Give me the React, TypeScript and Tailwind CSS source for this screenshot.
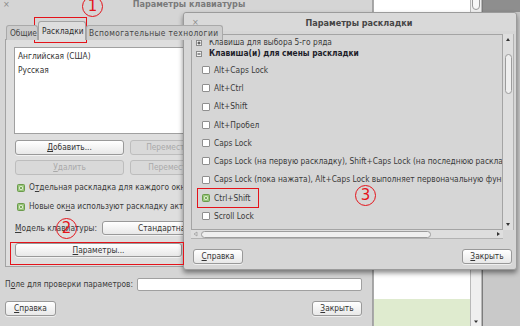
import React from 'react';

type Kids = { children?: React.ReactNode };

const U = ({ children }: Kids) => <span className="underline underline-offset-[1px]">{children}</span>;

function Btn({ children, disabled, className = '' }: Kids & { disabled?: boolean; className?: string }) {
  return (
    <div
      className={
        'flex items-center justify-center rounded-[3px] border whitespace-nowrap overflow-hidden ' +
        (disabled
          ? 'border-[#bdbdbd] bg-[#d9d9d9] text-[#a9a9a9] '
          : 'border-[#999999] bg-linear-to-b from-white to-[#e8e8e8] text-[#333333] shadow-[0_1px_0_rgba(255,255,255,0.6)] ') +
        className
      }
    >
      {children}
    </div>
  );
}

function GreenCheck() {
  return (
    <svg width="8" height="8" viewBox="0 0 8 8" className="shrink-0">
      <rect x="0.5" y="0.5" width="7" height="7" rx="1" fill="#97c578" stroke="#6a9a4c" />
      <rect x="2" y="2" width="4" height="4" fill="#d9ecc9" />
      <path d="M2.6 2.6 L5.4 5.4 M5.4 2.6 L2.6 5.4" stroke="#6f9f52" strokeWidth="0.9" />
    </svg>
  );
}

function EmptyCheck() {
  return <span className="block w-[8px] h-[8px] shrink-0 rounded-[1px] border border-[#8f8f8f] bg-white" />;
}

function Expander({ open }: { open?: boolean }) {
  return (
    <svg width="6" height="6" viewBox="0 0 6 6" className="shrink-0">
      <rect x="0.5" y="0.5" width="5" height="5" fill="#f4f4f4" stroke="#8a8a8a" />
      <path d="M1.5 3 H4.5" stroke="#333" strokeWidth="1" />
      {!open && <path d="M3 1.5 V4.5" stroke="#333" strokeWidth="1" />}
    </svg>
  );
}

const options = [
  'Alt+Caps Lock',
  'Alt+Ctrl',
  'Alt+Shift',
  'Alt+Пробел',
  'Caps Lock',
  'Caps Lock (на первую раскладку), Shift+Caps Lock (на последнюю раскладку)',
  'Caps Lock (пока нажата), Alt+Caps Lock выполняет первоначальную функцию Caps Lock',
  'Ctrl+Shift',
  'Scroll Lock',
];

function BackWindow() {
  return (
    <div className="absolute left-[372px] top-0 w-[148px] h-[326px] flex">
      <div className="w-[2px] bg-[#a9a9a9]" />
      <div className="w-[96px] flex flex-col bg-white">
        <div className="flex-1" />
        <div className="h-[27px] bg-[#dfebcf]" />
      </div>
      <div className="w-[12px] flex flex-col justify-between bg-[#efefef] border-x border-[#b8b8b8]">
        <div className="mx-[1px] h-[12px] -mt-[2px] rounded-b-full border border-[#9a9a9a] bg-[#f7f7f7]" />
        <svg width="10" height="6" viewBox="0 0 10 6" className="mb-[1px]">
          <path d="M3 1.5 H7 L5 4 Z" fill="#333" />
        </svg>
      </div>
      <div className="w-[1px] bg-[#7c7c7c]" />
      <div className="flex-1 flex flex-col">
        <div className="h-[12px] bg-[#8e8e8e]" />
        <div className="flex-1 bg-[#c9c9c9]" />
      </div>
    </div>
  );
}

function KeyboardWindow() {
  return (
    <div className="absolute left-0 top-[-6px] w-[373px] h-[340px] flex flex-col bg-[#d5d5d5] rounded-t-[5px] border-r border-[#a3a3a3]">
      <div className="h-[18px] flex items-center">
        <span className="w-[14px] pl-[3px] pt-[2px] text-[9px] text-[#8a8a8a]">×</span>
        <div className="flex-1 text-center pl-[6px] pt-[3px] font-bold text-[9px] text-[#7a7a7a]">
          Параметры клавиатуры
        </div>
        <span className="w-[14px]" />
      </div>

      <div className="flex flex-col pl-[5px] pr-[10px] pt-[10px]">
        <div className="flex items-end h-[18px] pl-[1px] -mb-px relative z-10">
          <div className="w-[32px] h-[15px] pl-[3px] flex items-center overflow-hidden whitespace-nowrap rounded-t-[3px] border border-b-0 border-[#a9a9a9] bg-[#cdcdcd] text-[#454545]">
            Общие
          </div>
          <div className="w-[48px] h-[19px] pl-[3px] flex items-center overflow-hidden whitespace-nowrap rounded-t-[3px] border border-b-0 border-[#a3a3a3] bg-[#dedede] text-[#2e2e2e]">
            Раскладки
          </div>
          <div className="h-[15px] pl-[2px] pr-[4px] flex items-center rounded-t-[3px] border border-b-0 border-[#a9a9a9] bg-[#cdcdcd] text-[#454545] whitespace-nowrap tracking-[0.4px]">
            Вспомогательные технологии
          </div>
        </div>

        <div className="flex flex-col border border-[#a3a3a3] bg-[#dedede] pt-[7px] pl-[8px] pr-[8px] pb-[9px]">
          <div className="h-[87px] border border-[#a0a0a0] bg-white px-[3px] pt-px text-[#333]">
            <div className="h-[14px] flex items-center">Английская (США)</div>
            <div className="h-[14px] flex items-center">Русская</div>
          </div>

          <div className="mt-[6px] pl-[1px] grid grid-cols-[109px_109px_109px] gap-x-[6px] gap-y-[5px]">
            <Btn className="h-[15px]">
              <U>Д</U>обавить...
            </Btn>
            <Btn disabled className="h-[15px]">
              Переместить вверх
            </Btn>
            <Btn disabled className="h-[15px]">
              Сбросить
            </Btn>
            <Btn disabled className="h-[15px]">
              <U>У</U>далить
            </Btn>
            <Btn disabled className="h-[15px]">
              Переместить вниз
            </Btn>
          </div>

          <div className="mt-[3px] flex flex-col pl-[3px] text-[#3a3a3a]">
            <div className="h-[19px] flex items-center gap-[4px] whitespace-nowrap">
              <GreenCheck />
              <span>
                О<U>т</U>дельная раскладка для каждого окна
              </span>
            </div>
            <div className="h-[19px] flex items-center gap-[4px] whitespace-nowrap">
              <GreenCheck />
              <span>
                Новые ок<U>н</U>а используют раскладку активного окна
              </span>
            </div>
          </div>

          <div className="mt-[5px] h-[14px] flex items-center">
            <span className="w-[88px] pl-[1px] text-[#3a3a3a] whitespace-nowrap">
              <U>М</U>одель клавиатуры:
            </span>
            <Btn className="flex-1 h-[14px] !justify-start pl-[35px]">Стандартная 105-клавишная (межд.)</Btn>
          </div>

          <Btn className="mt-[8px] ml-[1px] w-[167px] h-[14px]">
            <U>П</U>араметры...
          </Btn>
        </div>

        <div className="mt-[11px] h-[13px] flex items-center text-[#3a3a3a]">
          <span className="whitespace-nowrap">
            П<U>о</U>ле для проверки параметров:
          </span>
          <div className="ml-auto w-[225px] h-[13px] rounded-[2px] border border-[#a0a0a0] bg-white" />
        </div>

        <div className="mt-[10px] flex justify-between">
          <Btn className="w-[51px] h-[15px]">
            <U>С</U>правка
          </Btn>
          <Btn className="w-[50px] h-[15px]">
            <U>З</U>акрыть
          </Btn>
        </div>
      </div>
    </div>
  );
}

function LayoutDialog() {
  return (
    <div className="absolute left-[183px] top-[12px] w-[334px] h-[258px] flex flex-col bg-[#d6d6d6] rounded-[3px] border border-[#9b9b9b] shadow-[0_3px_5px_rgba(0,0,0,0.45)]">
      <div className="h-[18px] flex items-center bg-[#d9d9d9] rounded-t-[3px]">
        <span className="w-[16px] pl-[8px] pt-[1px] text-[9px] text-[#8d8d8d]">×</span>
        <div className="flex-1 text-center pl-[2px] pt-[2px] font-bold text-[9px] text-[#454545]">
          Параметры раскладки
        </div>
      </div>

      <div className="pl-[7px] pt-[3px] grid grid-cols-[312px_11px]">
        <div className="h-[196px] border border-[#a4a4a4] overflow-hidden pt-[2px] text-[#3a3a3a]">
          <div className="h-[11px] flex items-center gap-[7px] pl-[4px] whitespace-nowrap">
            <Expander />
            <span>Клавиша для выбора 5-го ряда</span>
          </div>
          <div className="h-[11px] flex items-center gap-[7px] pl-[4px] whitespace-nowrap">
            <Expander open />
            <span className="font-bold text-[#1e1e2a]">Клавиша(и) для смены раскладки</span>
          </div>
          <div className="mt-[2px] flex flex-col">
            {options.map((o) => (
              <div key={o} className="h-[18.25px] flex items-center gap-[4px] pl-[10px] whitespace-nowrap">
                {o === 'Ctrl+Shift' ? <GreenCheck /> : <EmptyCheck />}
                <span>{o}</span>
              </div>
            ))}
          </div>
        </div>

        <div className="h-[196px] flex flex-col items-center justify-between bg-[#dedede] border-r border-[#b3b3b3] py-[3px]">
          <svg width="6" height="5" viewBox="0 0 6 5">
            <path d="M3 1 L5 4 H1 Z" fill="#333" />
          </svg>
          <div className="flex-1 w-full px-[1.5px] pt-[12px] pb-[128px]">
            <div className="h-full rounded-full border border-[#9c9c9c] bg-[#efefef]" />
          </div>
          <svg width="6" height="5" viewBox="0 0 6 5">
            <path d="M1 1 H5 L3 4 Z" fill="#333" />
          </svg>
        </div>

        <div className="h-[9px] flex items-center bg-[#dedede] border-b border-[#b3b3b3] px-[2px] gap-[3px]">
          <svg width="5" height="6" viewBox="0 0 5 6">
            <path d="M4 1 V5 L1 3 Z" fill="none" stroke="#9a9a9a" strokeWidth="0.7" />
          </svg>
          <div className="w-[230px] h-[7px] rounded-full border border-[#9c9c9c] bg-[#efefef]" />
          <div className="flex-1" />
          <svg width="5" height="6" viewBox="0 0 5 6">
            <path d="M1 1 V5 L4 3 Z" fill="#333" />
          </svg>
        </div>
        <div />
      </div>

      <div className="mt-[10px] pl-[9px] pr-[4px] flex justify-between">
        <Btn className="w-[50px] h-[15px]">
          <U>С</U>правка
        </Btn>
        <Btn className="w-[50px] h-[15px]">
          <U>З</U>акрыть
        </Btn>
      </div>
    </div>
  );
}

function Circle({ n, className }: { n: string; className: string }) {
  return (
    <div
      className={
        'absolute w-[21px] h-[21px] rounded-full border-[1.5px] border-[#e4131a] flex items-center justify-center text-[15px] leading-none text-[#e4131a] [font-stretch:normal] ' +
        className
      }
    >
      {n}
    </div>
  );
}

export default function App() {
  return (
    <div className="relative w-[520px] h-[326px] overflow-hidden bg-[#c9c9c9] text-[8.3px] leading-none text-[#3a3a3a] font-['DejaVu_Sans',sans-serif] [font-stretch:condensed]">
      <BackWindow />
      <KeyboardWindow />
      <LayoutDialog />

      {/* annotations */}
      <div className="absolute left-[34px] top-[17px] w-[53px] h-[26px] border-[1.5px] border-[#e4131a]" />
      <div className="absolute left-[10px] top-[242px] w-[174px] h-[23px] border-[1.5px] border-[#e4131a]" />
      <div className="absolute left-[197px] top-[188px] w-[62px] h-[20px] border-[1.5px] border-[#e4131a]" />
      <Circle n="1" className="left-[82px] top-[-4px]" />
      <Circle n="2" className="left-[56px] top-[218px]" />
      <Circle n="3" className="left-[355px] top-[185px]" />
    </div>
  );
}
